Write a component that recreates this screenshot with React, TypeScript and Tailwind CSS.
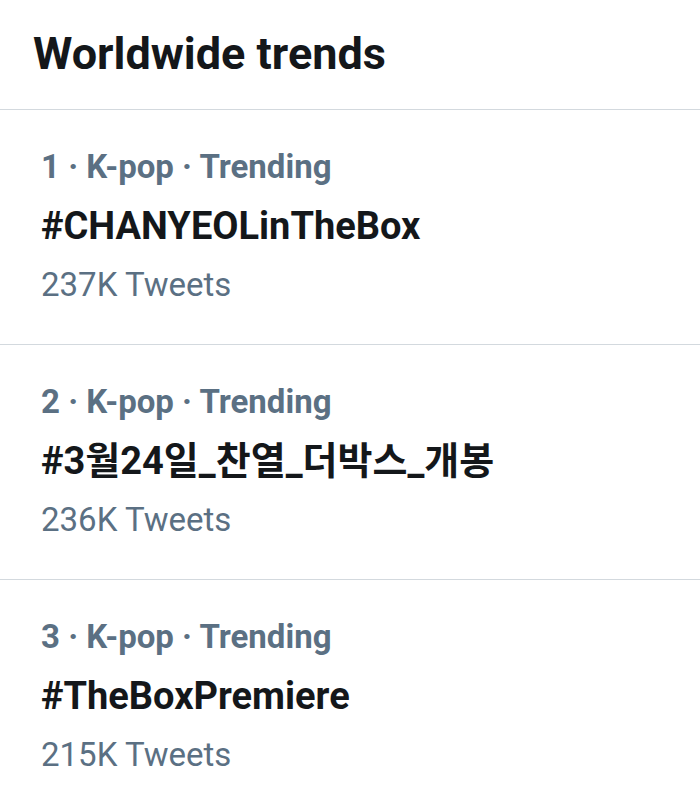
const trends = [
  { rank: 1, tag: "#CHANYEOLinTheBox", count: "237K" },
  { rank: 2, tag: "#3월24일_찬열_더박스_개봉", count: "236K" },
  { rank: 3, tag: "#TheBoxPremiere", count: "215K" },
];

const TrendItem = ({ rank, tag, count }: { rank: number; tag: string; count: string }) => (
  <div className="border-b border-[#d3d9de] pl-[41px] pt-[35px] pb-[37px]">
    <div className="text-[33px] leading-[44px] font-bold text-[#5b7083]">
      {rank} · K-pop · Trending
    </div>
    <div className="mt-[15px] text-[38px] leading-[44px] font-bold text-[#14171a]">{tag}</div>
    <div className="mt-[15px] text-[33px] leading-[44px] text-[#5b7083]">{count} Tweets</div>
  </div>
);

export default function App() {
  return (
    <div
      className="w-[700px] h-[812px] overflow-hidden bg-white"
      style={{ fontFamily: 'Roboto, "Noto Sans CJK KR", sans-serif' }}
    >
      <div className="border-b border-[#d3d9de] pl-[33px] pt-[28px] pb-[29px]">
        <h1 className="text-[45px] leading-[52px] font-bold text-[#14171a]">Worldwide trends</h1>
      </div>
      {trends.map((t) => (
        <TrendItem key={t.rank} {...t} />
      ))}
    </div>
  );
}
